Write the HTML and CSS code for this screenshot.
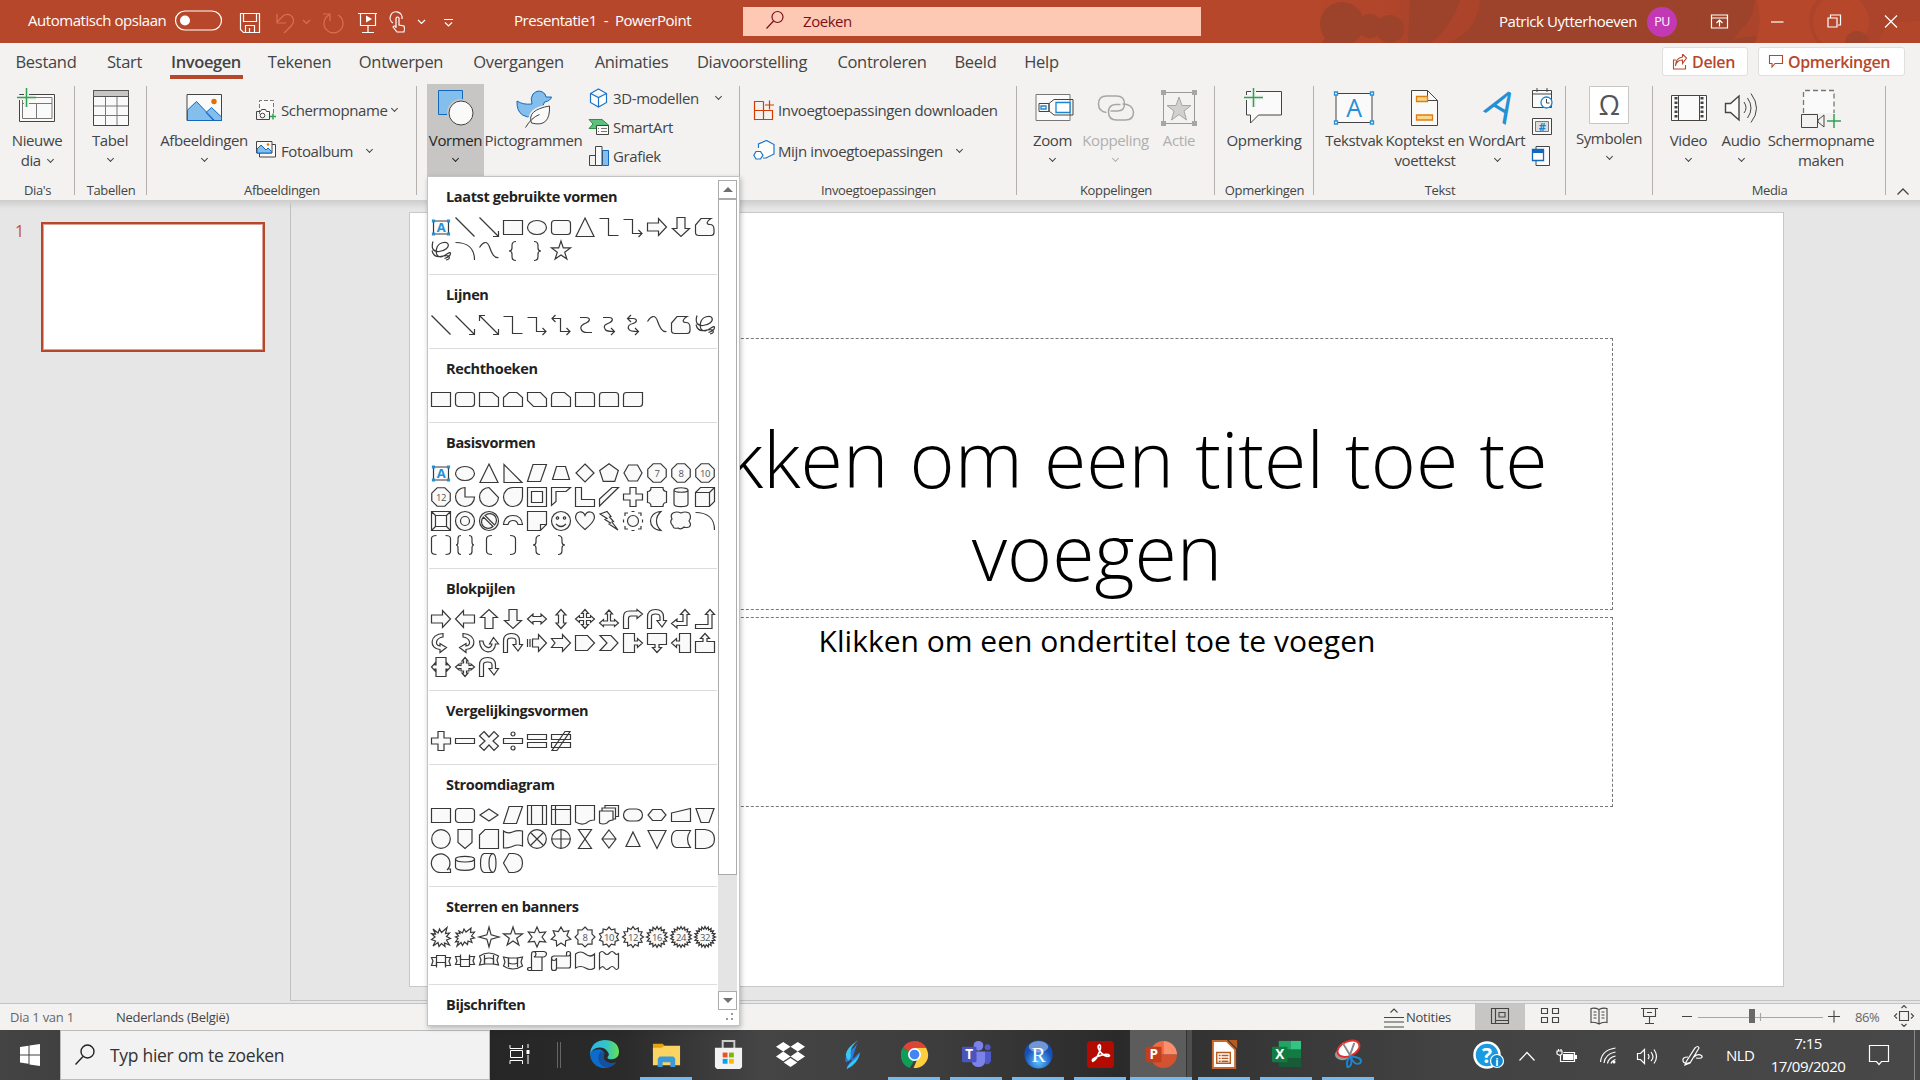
FILE: index.html
```html
<!DOCTYPE html>
<html lang="nl">
<head>
<meta charset="utf-8">
<title>Presentatie1 - PowerPoint</title>
<link rel="stylesheet" href="styles.css">
</head>
<body>
<div class="app">
  <header class="titlebar">
    <svg class="art" viewBox="1280 0 640 43"><defs><linearGradient id="fade"><stop offset="0" stop-color="#b7472a"/><stop offset="1" stop-color="#ad452a"/></linearGradient></defs><rect x="1280" width="140" height="43" fill="url(#fade)"/><rect x="1400" width="520" height="43" fill="#ab442a"/><g fill="#9d432b"><circle cx="1342" cy="24" r="22"/><circle cx="1370" cy="26" r="12"/><circle cx="1390" cy="29" r="14"/><circle cx="1335" cy="48" r="14"/><path d="M1480 0h275q-2 20-15 30-5 8-12 13h-280q30-12 32-43zM1410 0h50q-10 30-30 43h-22z"/><path d="M1715 43q20-6 50-7l-10 7z"/></g><g fill="#b7472a"><path d="M1757 0h60q-16 18 0 43h-62q8-20 2-43z"/><circle cx="1841" cy="22" r="28"/><path d="M1880 43q0-24 40-22v22z" opacity=".5"/></g><circle cx="1857" cy="43" r="12" fill="#a0432b"/></svg>
    <span class="autosave">Automatisch opslaan</span>
    <svg class="toggle" viewBox="174 9 49 22"><rect x="175.5" y="10.500" width="46" height="19" rx="9.500"/><circle cx="185" cy="20" r="5" fill="#fff" stroke="none"/></svg>
    <svg class="q-save" viewBox="239 12 22 22"><path d="M240.500 13.500h19v19h-16l-3-3zM243.500 13.500v8h13v-8M245.500 32.500v-7h9v7M249.500 28v4"/></svg>
    <svg class="q-undo dim" viewBox="275 12 22 22"><path d="M277 14v9h9M277 22l6-6c6-4 12 1 10 7-1 3-5 6-9 10"/></svg>
    <svg class="q-c1 dim" viewBox="301 16 11 11"><path d="M303 20l3.500 3.500 3.500-3.500"/></svg>
    <svg class="q-redo dim" viewBox="321 12 24 22"><path d="M323 14h7v7M329 15a9.500 9.500 0 1 0 9 0"/></svg>
    <svg class="q-show" viewBox="357 12 22 22"><path d="M358 13.500h19M360.500 13.500v12h15v-12M368 26v6M362 32.500h12"/><path d="M366 15.500v7l6-3.500z" fill="#fff" stroke="none"/></svg>
    <svg class="q-touch" viewBox="389 12 18 22"><path d="M393 23a6 6 0 1 1 9-4M396 28V18q1.500-2 3 0v7l5 1q1 2 0 6h-7l-4-5q1-2 3 0"/></svg>
    <svg class="q-c2" viewBox="415 16 13 11"><path d="M418 20l3.500 3.500 3.500-3.500"/></svg>
    <svg class="q-more" viewBox="442 14 13 13"><path d="M444 18.500h9M445 21.500l3.500 3.500 3.500-3.500"/></svg>
    <span class="docname">Presentatie1&nbsp; - &nbsp;PowerPoint</span>
    <div class="searchbox"><svg width="22" height="22" viewBox="764 11 22 22"><circle cx="777.500" cy="18" r="5.500"/><path d="M773.500 22l-7 7.500"/></svg><span>Zoeken</span></div>
    <span class="user">Patrick Uytterhoeven</span>
    <span class="avatar">PU</span>
    <svg class="w-rib" viewBox="1709 12 21 18"><path d="M1711.500 14.500h16v13h-16zM1711.500 17.500h16M1719.500 26v-6M1716.500 22.500l3-3 3 3"/></svg>
    <svg class="w-min" viewBox="1769 12 16 18"><path d="M1771 21.500h12.500"/></svg>
    <svg class="w-max" viewBox="1826 12 17 18"><path d="M1828 17.500h9v9h-9zM1830.500 17v-2.500h10v10H1838"/></svg>
    <svg class="w-close" viewBox="1883 12 16 18"><path d="M1885 15l12 12M1897 15l-12 12"/></svg>
  </header>

  <nav class="tabs">
    <span>Bestand</span><span>Start</span><span class="active">Invoegen</span><span>Tekenen</span><span>Ontwerpen</span><span>Overgangen</span><span>Animaties</span><span>Diavoorstelling</span><span>Controleren</span><span>Beeld</span><span>Help</span>
    <div class="tab-actions">
      <button class="share"><svg width="16" height="16" viewBox="1671 54 16 16"><path d="M1675 60h-2.500v9h12v-4M1674.500 66q1-6 7-6v3.500l4-5.500-4-4v3q-7 1-7 9z"/></svg>Delen</button>
      <button class="comments"><svg width="16" height="16" viewBox="1768 54 16 16"><path d="M1769.500 55.500h13v8h-7.500l-3 3.500v-3.500h-2.500z"/></svg>Opmerkingen</button>
    </div>
  </nav>

  <div class="ribbon">
    <section class="group">
      <div class="body">
        <div class="big w74"><svg viewBox="15 86 44 44"><path class="k f" d="M19.500 94.500h35v27h-35z"/><path class="k2" d="M22.500 97.500h29.500v21H22.500zM22.500 103.500H52M36.500 103.500v15"/><path stroke="#f3f2f1" stroke-width="5" d="M17 97.500h19M26.500 88v19"/><path class="gr" d="M17 97.500h19M26.500 88v19"/></svg><span>Nieuwe</span><span>dia <i class="chev"></i></span></div>
      </div><div class="label">Dia's</div>
    </section>
    <section class="group">
      <div class="body"><div class="big w70"><svg viewBox="88 86 44 44"><path class="k f" d="M93.500 90.500h35v35h-35z"/><path fill="#c8c6c4" stroke="#555" d="M93.500 90.500h35v6h-35z"/><path class="k2" d="M105.500 97v28M117 97v28M94 106h34M94 115.500h34"/></svg><span>Tabel</span><i class="chev"></i></div></div>
      <div class="label">Tabellen</div>
    </section>
    <section class="group">
      <div class="body"><div class="big w104 ml5"><svg viewBox="182 86 44 44"><path class="k f" d="M187 94.500h34.500v26H187z"/><path class="bl" d="M187.500 110l9-8.500 18 19h-27zM206 112.500l5.500-5 10 9.500v3.500h-8z"/><circle cx="214" cy="101.500" r="2.700" fill="#e07000"/></svg><span>Afbeeldingen</span><i class="chev"></i></div>
        <div class="rows two">
          <div class="row"><svg viewBox="256 99 22 22"><path class="f" stroke="#777" stroke-dasharray="4 2" d="M259.500 114v-13.500h14v13"/><path class="k" fill="#bbb" d="M256.500 111.500h4l1-2h4l1 2h3v8h-13z"/><circle class="k f" cx="262.500" cy="115.500" r="2.300"/><path class="gr" d="M270 116.500h6M273 113.500v6"/></svg>Schermopname<i class="chev"></i></div>
          <div class="row"><svg viewBox="256 140 22 22"><path class="k f" d="M259.500 144.500h16v12.500h-16z"/><path class="k f" d="M256.500 141.500h15.500v11.500h-15.500z"/><path class="bl" d="M257 149l4-4 5 5 2-2 3.500 3.500v1.500H257z"/><circle cx="268" cy="144.500" r="1.200" fill="#e07000"/></svg>Fotoalbum<i class="chev far"></i></div>
        </div></div>
      <div class="label">Afbeeldingen</div>
    </section>
    <section class="group">
      <div class="body"><div class="big w57 ml10 pressed"><svg viewBox="433 86 44 44"><path fill="#83beec" stroke="#1269bb" d="M437.500 90.500h24v24h-24z"/><circle cx="460" cy="113" r="14" fill="#c8c6c4"/><circle class="k f" cx="460" cy="113" r="12"/></svg><span>Vormen</span><i class="chev"></i></div>
        <div class="big w99"><svg viewBox="511.500 86 44 44"><path class="bl" d="M516.500 101q6 4 15 3-2-6 1-10 6-6 12 0l1 3h5.500q-1 4-7 5-1 4-4 7-8 12-18 6-6-4-5.500-14z"/><path fill="#fafafa" stroke="#f3f2f1" stroke-width="4" d="M531 123q-5-13 18-17 1 22-18 17z"/><path class="k f" d="M531 123q-5-13 18-17 1 22-18 17z"/><path class="k" fill="none" d="M525 127.500q6-10 14-13"/></svg><span>Pictogrammen</span></div>
        <div class="rows three">
          <div class="row"><svg viewBox="588 87 22 22"><path class="bs" d="M598.500 89l8 4.500v9l-8 4.500-8-4.500v-9zM590.500 93.500l8 4 8-4M598.500 97.500V107"/></svg>3D-modellen<i class="chev mid"></i></div>
          <div class="row"><svg viewBox="588 116 22 22"><path fill="#5cc07a" stroke="#279247" d="M589 119.500h13l7 6h-10l-3 3h-7l4-4.500z"/><path class="k f" d="M596.500 125.500h12v9h-12z"/><path stroke="#777" d="M598 128.500h1M598 131.500h1M601 128.500h6M601 131.500h6"/></svg>SmartArt</div>
          <div class="row"><svg viewBox="588 145 22 22"><path class="k" fill="#c8c6c4" d="M589.500 155.500h6v10h-6z"/><path fill="#83beec" stroke="#1269bb" d="M602.500 150.500h6v15h-6z"/><path class="k f" d="M595.500 146.500h6.500v19h-6.500z"/></svg>Grafiek</div>
        </div></div>
      <div class="label"></div>
    </section>
    <section class="group">
      <div class="body"><div class="rows two addins">
          <div class="row"><svg viewBox="753 99 22 22"><path fill="none" stroke="#d83b01" stroke-width="1.200" d="M763.500 101.500h-9v18h18v-9h-18M763.500 101.500v18M765 105h9M769.500 100.500v9"/></svg>Invoegtoepassingen downloaden</div>
          <div class="row"><svg viewBox="753 140 22 22"><path class="bs" d="M758.500 148v-4l8-3.500 7.500 4v9.500l-8 4h-3M756 151.500h4.500l2.500 3.700-2.500 3.800H756l-2.200-3.800z"/></svg>Mijn invoegtoepassingen<i class="chev far"></i></div>
      </div></div>
      <div class="label">Invoegtoepassingen</div>
    </section>
    <section class="group">
      <div class="body"><div class="big w57 ml7"><svg viewBox="1030.500 86 44 44"><path class="f" stroke="#777" d="M1035.500 94.500h34v26h-34z"/><path class="k f" d="M1038.500 103.500h10v8h-10z"/><path class="k" fill="#bbb" d="M1048.500 103.500l5-4h19v15.500h-19l-5-4z"/><path fill="#fff" stroke="#1a86d0" stroke-width="1.300" d="M1055.500 102.500h14v10h-14zM1040.500 106h5v3h-5z"/></svg><span>Zoom</span><i class="chev"></i></div>
        <div class="big w69 off"><svg viewBox="1093.500 86 44 44"><g fill="none" stroke="#a6a6a6" stroke-width="1.500"><path d="M1106 112.500q-8-1-8-8.500 0-8 8-8h10q8 0 8 8 0 7-7 7h-7"/><path d="M1122 104q10 0 11 8 0 8-8 8h-9q-8 0-8-8 0-7 7-7.500h5"/></g></svg><span>Koppeling</span><i class="chev"></i></div>
        <div class="big w58 off"><svg viewBox="1157 86 44 44"><path fill="none" stroke="#999" d="M1163.500 92.500h31v31h-31z"/><path fill="#a6a6a6" d="M1161 90h5v5h-5zM1192 90h5v5h-5zM1161 121h5v5h-5zM1192 121h5v5h-5z"/><path fill="#d2d0ce" stroke="#a6a6a6" d="M1179 97l3 8.500h9l-7 5.500 2.500 9-7.500-5.500-7.500 5.500 2.500-9-7-5.500h9z"/></svg><span>Actie</span></div></div>
      <div class="label">Koppelingen</div>
    </section>
    <section class="group">
      <div class="body"><div class="big w98"><svg viewBox="1242 86 44 44"><path class="k f" d="M1246.500 91.500h35v23.500h-23l-8 8v-8h-4z"/><path stroke="#f3f2f1" stroke-width="5" d="M1244 97.500h19M1253.500 88v19"/><path class="gr" d="M1244 97.500h19M1253.500 88v19"/></svg><span>Opmerking</span></div></div>
      <div class="label">Opmerkingen</div>
    </section>
    <section class="group">
      <div class="body"><div class="big w56 ml12"><svg viewBox="1332 86 44 44"><path class="k f" d="M1336 93.500h36v29h-36z"/><path fill="#fff" stroke="#2490d5" stroke-width="1.300" d="M1334.500 92h3v3h-3zM1370.500 92h3v3h-3zM1334.500 121h3v3h-3zM1370.500 121h3v3h-3z"/><text x="1354" y="117" font-size="25" text-anchor="middle" fill="#2490d5">A</text></svg><span>Tekstvak</span></div>
        <div class="big w86"><svg viewBox="1403 86 44 44"><path class="k f" d="M1411.500 90.500h16l10 10v25h-26z"/><path class="k" fill="none" d="M1427.500 90.500v10h10"/><path fill="#fbd789" stroke="#e07d10" stroke-width="1.300" d="M1416.500 96.500h11v5h-11zM1416.500 115h16v5h-16z"/></svg><span>Koptekst en</span><span>voettekst</span></div>
        <div class="big w58 wordart"><svg viewBox="1475 86 44 44"><text transform="translate(1494 118) rotate(31)" font-size="42" text-anchor="middle" fill="#2490d5">A</text></svg><span>WordArt</span><i class="chev"></i></div>
        <div class="rows three icons">
          <svg viewBox="1531 87 22 22"><path class="k f" d="M1532.500 90.500h19v17h-19zM1532.500 94h19M1537 88v4M1547 88v4"/><circle cx="1546.500" cy="102.500" r="5.500" fill="#fff" stroke="#1a86d0" stroke-width="1.300"/><path class="k" d="M1546.500 99v4h3"/></svg>
          <svg viewBox="1531 116 22 22"><path class="k f" d="M1532.500 118.500h19v16h-19z"/><path fill="#ddd" stroke="#777" d="M1535.500 121.500h13v10h-13z"/><text x="1542" y="131" font-size="11" font-weight="700" text-anchor="middle" fill="#1a86d0">#</text></svg>
          <svg viewBox="1531 145 22 22"><path class="k f" d="M1536 146.500h13.500v19H1536z"/><path fill="#fff" stroke="#1269bb" stroke-width="1.300" d="M1532.500 149.500h11v11h-11z"/><path fill="#1269bb" d="M1532.500 150h11v3h-11z"/></svg>
        </div></div>
      <div class="label">Tekst</div>
    </section>
    <section class="group">
      <div class="body"><div class="big w86 sym"><svg viewBox="1587 86 44 42"><path fill="#fff" stroke="#c8c6c4" d="M1589.500 86.500h39v37h-39z"/><text x="1609" y="114.500" font-size="27" text-anchor="middle" fill="#555">Ω</text></svg><span>Symbolen</span><i class="chev"></i></div></div>
      <div class="label"></div>
    </section>
    <section class="group">
      <div class="body"><div class="big w53 ml9"><svg viewBox="1667 86 44 44"><path class="k f" d="M1671.500 95.500h35v25h-35zM1678.500 95.500v25M1699.500 95.500v25"/><path stroke="#444" stroke-width="3" stroke-dasharray="2.500 2" d="M1676 97v22M1702 97v22"/></svg><span>Video</span><i class="chev"></i></div>
        <div class="big w52"><svg viewBox="1719 86 44 44"><path class="k f" stroke-width="1.400" d="M1725.500 103.500h5l8.500-7.500v24l-8.500-7.500h-5z"/><path class="k" fill="none" d="M1744 102q4 6 0 11M1747.500 98q7 10 0 20M1751 93.500q11 15 0 29"/></svg><span>Audio</span><i class="chev"></i></div>
        <div class="big w108"><svg viewBox="1799 86 44 44"><path class="f" stroke="#777" stroke-width="1.300" stroke-dasharray="5 3" d="M1803.500 113V90.500h30.500V113"/><path class="k" fill="#c8c6c4" d="M1801.500 114.500h16v13h-16zM1818 120l6-5v12l-6-5z"/><path class="gr" d="M1827 121h14M1834 114v14"/></svg><span>Schermopname</span><span>maken</span></div></div>
      <div class="label">Media</div>
    </section>
    <div class="collapse"><svg width="14" height="9" viewBox="0 0 14 9"><path d="M1.500 7.500l5.500-5.500 5.500 5.500"/></svg></div>
  </div>

  <main class="workspace">
    <aside class="thumbs"><span class="num">1</span><div class="thumb"></div></aside>
    <div class="canvas">
      <div class="slide">
        <div class="ph title">Klikken om een titel toe te<br>voegen</div>
        <div class="ph sub">Klikken om een ondertitel toe te voegen</div>
      </div>
    </div>
    <div class="shapes-menu">
      <div class="gallery" id="gallery"></div>
      <div class="scroll"><b class="btn up"></b><div class="grip"></div><div class="track"></div><b class="btn down"></b></div>
      <svg class="resize" width="8" height="8" viewBox="0 0 8 8"><path fill="#999" d="M5 0h2v2H5zM5 5h2v2H5zM0 5h2v2H0z"/></svg>
    </div>
  </main>

  <footer class="status">
    <span class="s1">Dia 1 van 1</span><span class="s2">Nederlands (België)</span>
    <span class="notes"><svg width="20" height="22" viewBox="1384 1007 20 22"><path d="M1384 1018.500h20M1384 1023h20M1384 1028h20M1390.500 1013.500l3.500-3.500 3.500 3.500"/></svg>Notities</span>
    <span class="view on"><svg viewBox="1490 1008 20 20"><path d="M1491.500 1009.500h17v15h-17zM1495.500 1009.500v15M1495.500 1021.500h13M1499 1013.500h6v4.500h-6z"/></svg></span>
    <span class="view"><svg viewBox="1540 1008 20 20"><path d="M1541.500 1009.500h6v5h-6zM1552.500 1009.500h6v5h-6zM1541.500 1018.500h6v5h-6zM1552.500 1018.500h6v5h-6z"/></svg></span>
    <span class="view"><svg viewBox="1589 1008 20 20"><path d="M1599 1010.500q-4-2-8-1v14q4-1 8 1.500 4-2.500 8-1.500v-14q-4-1-8 1zv14M1593.500 1013h3M1593.500 1016h3M1593.500 1019h3M1601.500 1013h3M1601.500 1016h3M1601.500 1019h3"/></svg></span>
    <span class="view"><svg viewBox="1639 1008 20 20"><path d="M1641 1009.500h17M1643.500 1009.500v8h12v-8M1649.500 1018v6M1645 1024.500h9M1647 1013.500h5"/></svg></span>
    <svg class="zoomer" viewBox="1680 1007 162 22"><path d="M1682 1017.500h10M1828 1017.500h12M1834 1011.500v12"/><path stroke="#a6a6a6" d="M1698 1018.500h125M1760.500 1014v8"/><path fill="#6b6967" stroke="none" d="M1749 1010h6v14h-6z"/></svg>
    <span class="pct">86%</span>
    <svg class="fit" viewBox="1893 1006 22 24"><path d="M1899.500 1012.500h9v9h-9zM1901.500 1009l2.500-2.500 2.500 2.500M1901.500 1025l2.500 2.500 2.500-2.500M1897 1014.500l-2.500 2.500 2.500 2.500M1911 1014.500l2.500 2.500-2.500 2.500"/></svg>
  </footer>

  <footer class="taskbar">
    <span class="start"><svg width="20" height="22" viewBox="0 0 20 22"><path fill="#fff" d="M0 3l8.500-1.300v8.800H0zM9.500 1.500L20 0v10.500H9.500zM0 11.500h8.500v8.300L0 18.500zM9.500 11.500H20V22l-10.500-1.500z"/></svg></span>
    <span class="tsearch"><svg width="22" height="24" viewBox="0 0 22 24"><circle cx="13.500" cy="8.500" r="6.500"/><path d="M9 13.500L1.500 21.500"/></svg>Typ hier om te zoeken</span>
    <span class="tview"><svg width="21" height="20" viewBox="509 1044 21 20"><path d="M510 1045v3.500h12.500V1045M510 1064v-3.500h12.500v3.500M510.500 1050.500h12v7h-12zM528 1044v4M528 1055v9"/><path d="M526.500 1050h3v4h-3z" fill="#fff" stroke="none"/></svg></span>
    <span class="tsep"></span>
    <span class="app-i"><svg viewBox="0 0 32 32"><defs><linearGradient id="e1" x1="0" x2="1"><stop offset="0" stop-color="#2bb3ec"/><stop offset=".6" stop-color="#36c6c0"/><stop offset="1" stop-color="#6ae04e"/></linearGradient></defs><path fill="#0c6ccc" d="M1 16A15 15 0 0 0 28 24q-5 2-9 0-6-3-3-9-3-6-9-4-5 1-6 5z"/><path fill="#1450a0" d="M12 13q-6 8 2 15 8 4 14-4-5 2-9 0-6-3-3-9z"/><path fill="url(#e1)" d="M1 16Q2 2 16 1q14 0 15 12 0 7-7 8-5 0-5-2 3-3 0-6-3-5-10-4-6 1-8 7z"/></svg></span>
    <span class="app-i run"><svg viewBox="0 0 32 32"><path fill="#e5a50a" d="M2 5h10l2 2v5H2z"/><path fill="#fcd462" d="M2 9h9l3-2h16v20H2z"/><path fill="#3c99dc" d="M7 29V20l2-2h14l2 2v9h-5v-5h-8v5z"/></svg></span>
    <span class="app-i"><svg viewBox="0 0 32 32"><path fill="none" stroke="#ccc" stroke-width="2" d="M10 10V2h12v8"/><path fill="#f2f2f2" d="M2 9h28v20l-2 2H4l-2-2z"/><path fill="#f25022" d="M10 14h5v5h-5z"/><path fill="#7fba00" d="M16.500 14h5v5h-5z"/><path fill="#00a4ef" d="M10 20.500h5v5h-5z"/><path fill="#ffb900" d="M16.500 20.500h5v5h-5z"/></svg></span>
    <span class="app-i"><svg viewBox="0 0 32 32"><path fill="#fff" d="M8.500 3l7.500 5-7.500 5L1 8zM23.500 3L31 8l-7.500 5L16 8zM8.500 13l7.500 5-7.500 5L1 18zM23.500 13l7.500 5-7.500 5-7.500-5zM16 19.500l7 4.700-7 4.800-7-4.800z"/></svg></span>
    <span class="app-i"><svg viewBox="0 0 32 32"><path fill="#2a7be0" d="M22 1q-1 5-6 9-9 6-7 14 7-2 13-9 3-2 0 5-4 8-12 11 0-4 5-8z"/><path fill="#38c8f0" d="M22 1q-12 8-13 15 1 5 3 6 3-2 2-8 0-6 8-13zM24 13q-2 6-8 10-5 4-6 8 12-6 14-18z"/></svg></span>
    <span class="app-i run"><svg viewBox="0 0 32 32"><path fill="#db4437" d="M16 16L4 9Q8 2 16 2t12 7z"/><path fill="#0f9d58" d="M16 16l-5 13Q2 26 2 16q0-4 2-7z"/><path fill="#ffcd40" d="M16 9h12q5 10-2 17-4 4-11 4l5-12z"/><path fill="#db4437" d="M16 2q8 0 12 7H16z"/><path fill="#0f9d58" d="M4 9l6 9 6 4-5 8Q2 27 2 16q0-4 2-7z"/><circle cx="16" cy="16" r="6.700" fill="#fff"/><circle cx="16" cy="16" r="5" fill="#4285f4"/></svg></span>
    <span class="app-i run"><svg viewBox="0 0 32 32"><circle cx="18" cy="7" r="5" fill="#7b83eb"/><circle cx="27.500" cy="8.500" r="3" fill="#5059c9"/><path fill="#5059c9" d="M25 13h6v9q-1 5-6 4z"/><path fill="#7b83eb" d="M11 13h14v10q-1 6-7 6t-7-6z"/><rect x="1" y="8" width="15" height="16" rx="1" fill="#4b53bc"/><text x="8.500" y="21" font-size="14" font-weight="700" text-anchor="middle" fill="#fff">T</text></svg></span>
    <span class="app-i run"><svg viewBox="0 0 32 32"><defs><radialGradient id="r1" cy=".75"><stop offset="0" stop-color="#5cc4ff"/><stop offset="1" stop-color="#1550b8"/></radialGradient></defs><circle cx="16" cy="16" r="14.500" fill="url(#r1)"/><ellipse cx="16" cy="8" rx="10" ry="6" fill="#fff" opacity=".4"/><text class="serif" x="16" y="23.500" font-size="22" text-anchor="middle" fill="#fff">R</text></svg></span>
    <span class="app-i run"><svg viewBox="0 0 32 32"><rect x="2" y="2" width="28" height="28" rx="4" fill="#b30b00"/><path fill="none" stroke="#fff" stroke-width="1.800" d="M8 23q-2-2 5-5t11-2q3 2-1 2-5-1-8-6t0-6q2 1 0 7-3 8-7 10z"/></svg></span>
    <span class="app-i run active"><svg viewBox="0 0 32 32"><path fill="#ed6c47" d="M18 2a14 14 0 0 0-14 14h14z"/><path fill="#ff8f6b" d="M18 2a14 14 0 0 1 14 14H18z"/><path fill="#d35230" d="M4 16a14 14 0 0 0 28 0z"/><rect x="0" y="8" width="16" height="16" rx="1" fill="#c43e1c"/><text x="8" y="21" font-size="14" font-weight="700" text-anchor="middle" fill="#fff">P</text></svg></span>
    <span class="app-i run"><svg viewBox="0 0 32 32"><path fill="#fff" stroke="#c8682c" stroke-width="2" d="M4 2h14l9 9v19H4z"/><path fill="#b85a1e" d="M20 1h9v9z"/><path fill="none" stroke="#b85a1e" stroke-width="1.500" d="M8 14h14v11H8zM10 17h2M10 20h2M10 23h2M13 17h7M13 20h7M13 23h7"/></svg></span>
    <span class="app-i run"><svg viewBox="0 0 32 32"><path fill="#21a366" d="M8 2h12v9H8z"/><path fill="#33c481" d="M20 2h11v9H20z"/><path fill="#107c41" d="M8 11h23v9H8z"/><path fill="#185c37" d="M8 20h23v9H8z"/><rect x="1" y="8" width="16" height="16" rx="1" fill="#107c41"/><text x="9" y="21" font-size="14" font-weight="700" text-anchor="middle" fill="#fff">X</text></svg></span>
    <span class="app-i run"><svg viewBox="0 0 32 32"><ellipse cx="10" cy="16" rx="8" ry="6" fill="#999"/><ellipse cx="16" cy="10" rx="12" ry="7.500" fill="#fff" stroke="#e03030" stroke-width="2" transform="rotate(-25 16 10)"/><path stroke="#888" stroke-width="2" d="M10 4l9 15M22 4l-5 14"/><path fill="none" stroke="#1a86d0" stroke-width="2" d="M18 18q-5 4-3 11 6-1 3-11 4 10 10 7 4-6-10-7z"/></svg></span>
    <span class="tray">
      <svg class="t-help" viewBox="1472 1042 34 30"><circle cx="1487" cy="1056" r="12.500" fill="#1a9be0" stroke="#fff" stroke-width="2.500"/><text x="1487" y="1064" font-size="21" font-weight="700" text-anchor="middle" fill="#fff">?</text><circle cx="1497" cy="1062" r="6.500" fill="#0e88d0"/><text x="1497" y="1066.500" font-size="11" font-weight="700" text-anchor="middle" fill="#fff">i</text></svg>
      <svg class="t-up" viewBox="1517 1046 20 18"><path d="M1519.500 1059.500l7.500-8 7.500 8"/></svg>
      <svg class="t-bat" viewBox="1555 1046 24 18"><path d="M1563.500 1051.500h11v9h-14v-6M1557 1050h5v3l-2 1.500-3-1.500zM1558.500 1050v-2M1561 1050v-2"/><path fill="#fff" stroke="none" d="M1563 1053h10.500v6H1563zM1575 1054h2v4h-2z"/></svg>
      <svg class="t-wifi" viewBox="1598 1046 20 20"><path d="M1600.500 1062q1-12 15-14M1604 1063q1-9 11.500-11M1607.500 1063.500q1-6 8-7.500M1611 1063.500q1-3 4.500-4"/><circle cx="1614" cy="1062" r="1.500" fill="#fff" stroke="none"/></svg>
      <svg class="t-vol" viewBox="1635 1045 24 20"><path d="M1637.500 1052.500h3l4-4v14l-4-4h-3zM1648 1053q2 3 0 5M1651 1051q4 5 0 9M1654 1048.500q5 7 0 14"/></svg>
      <svg class="t-pen" viewBox="1680 1044 24 22"><path d="M1686 1061l9-14q3-3 4 0l-9 15-5 2zM1688 1056q-6 0-5 4 1 4 8 1M1694 1056q4-4 8-1 1 3-6 2"/></svg>
      <span class="lang">NLD</span>
      <span class="clock"><span>7:15</span><span>17/09/2020</span></span>
      <svg class="t-note" viewBox="1867 1043 24 24"><path d="M1869.500 1045.500h19v16h-7l-2.500 3-2.500-3h-7z"/></svg>
      <span class="edge"></span>
    </span>
  </footer>
</div>
<script src="shapes.js"></script>
</body>
</html>
```
FILE: styles.css
```css
* { box-sizing: border-box; }
body { margin: 0; overflow: hidden; font-family: "Open Sans", "Noto Sans", sans-serif; color: #444; }
svg { display: block; flex: none; }
.app { width: 1920px; height: 1080px; display: grid; grid-template-rows: 43px 41px 116px 804px 26px 50px; background: #e6e6e6; }

.titlebar { position: relative; background: #b7472a; color: #fff; font-size: 15px; letter-spacing: -.45px; white-space: nowrap; display: grid; align-items: center;
  grid-template-columns: 28px 146px 65px 36px 26px 20px 36px 32px 26px 27px 72px 229px 756px 148px 62px 60px 57px 57px 37px; }
.titlebar > * { grid-row: 1; }
.titlebar > svg:not(.art) { height: 43px; position: relative; fill: none; stroke: #fff; stroke-width: 1.2; }
.titlebar > svg.dim { stroke: #dd6e53; }
.art { position: absolute; right: 0; top: 0; width: 640px; height: 43px; }
.autosave { grid-column: 2; padding-bottom: 3px; }
.toggle { grid-column: 3; width: 49px; margin-top: -3px; }
.q-save { grid-column: 4; width: 22px; }
.q-undo { grid-column: 5; width: 22px; }
.q-c1 { grid-column: 6; width: 11px; }
.q-redo { grid-column: 7; width: 24px; }
.q-show { grid-column: 8; width: 22px; }
.q-touch { grid-column: 9; width: 18px; }
.q-c2 { grid-column: 10; width: 13px; }
.q-more { grid-column: 11; width: 13px; }
.titlebar > .q-save, .titlebar > .q-undo, .titlebar > .q-redo, .titlebar > .q-show, .titlebar > .q-touch { padding-top: 3px; }
.docname { grid-column: 12; padding-bottom: 3px; }
.searchbox { grid-column: 13; width: 458px; height: 29px; background: #fdc9b5; color: #7a0f1a; display: flex; align-items: center; gap: 17px; padding: 0 0 1px 21px; }
.searchbox svg { fill: none; stroke: #7a0f1a; stroke-width: 1.2; }
.user { grid-column: 14; position: relative; padding-bottom: 1px; }
.avatar { grid-column: 15; position: relative; width: 30px; height: 30px; border-radius: 50%; background: #c239b3; font-size: 12.5px; line-height: 30px; text-align: center; }
.w-rib { grid-column: 16; width: 21px; }
.w-min { grid-column: 17; width: 16px; }
.w-max { grid-column: 18; width: 17px; }
.w-close { grid-column: 19; width: 16px; }

.tabs { background: #f3f2f1; display: grid; grid-template-columns: 92px 65px 98px 89px 114px 121px 105px 136px 124px 63px 69px 1fr; font-size: 16.5px; letter-spacing: -.3px; text-align: center; white-space: nowrap; }
.tabs > span { display: flex; flex-direction: column; align-items: center; justify-content: flex-start; line-height: 24px; padding-top: 7px; }
.tabs > .active { font-weight: 600; letter-spacing: -.4px; }
.tabs > .active::after { content: ""; width: 73px; height: 4px; margin-top: 1px; background: #b7472a; }
.tab-actions { display: flex; justify-content: flex-end; gap: 10px; padding: 4px 15px 8px 0; }
.tab-actions button { border: 1px solid #e1dfdd; border-radius: 3px; background: #fff; color: #b7472a; font: 600 16px "Open Sans", sans-serif; letter-spacing: -.35px; display: flex; align-items: center; gap: 4px; padding: 0 0 0 9px; white-space: nowrap; }
.tab-actions svg { fill: none; stroke: #b7472a; stroke-width: 1.1; }
.share { width: 86px; }
.comments { width: 147px; }

.ribbon { background: #f3f2f1; display: grid; grid-template-columns: 75px 72px 270px 323px 277px 198px 99px 252px 87px 233px 1fr; font-size: 15px; letter-spacing: -.38px; white-space: nowrap; }
.group { display: grid; grid-template-rows: 92px 24px; background: linear-gradient(#b3b0ad, #b3b0ad) right 2px / 1px 109px no-repeat; }
.body { display: flex; }
.label { font-size: 13px; letter-spacing: -.35px; text-align: center; line-height: 28px; }
.big { display: flex; flex-direction: column; align-items: center; padding-top: 2px; line-height: 20px; flex: none; }
.big svg { width: 44px; height: 44px; }
.big > .chev { margin-top: 6px; }
.wordart svg { overflow: visible; }
.sym svg { height: 42px; }
.pressed { background: #c8c6c4; color: #262626; }
.off { color: #b1afad; }
.w52 { width: 52px; } .w53 { width: 53px; } .w56 { width: 56px; } .w57 { width: 57px; } .w58 { width: 58px; } .w69 { width: 69px; } .w70 { width: 70px; } .w74 { width: 74px; } .w86 { width: 86px; } .w98 { width: 98px; } .w99 { width: 99px; } .w104 { width: 104px; } .w108 { width: 108px; }
.ml5 { margin-left: 5px; } .ml7 { margin-left: 7px; } .ml9 { margin-left: 9px; } .ml10 { margin-left: 10px; } .ml12 { margin-left: 12px; }
.chev { display: inline-block; width: 5px; height: 5px; border: solid currentColor; border-width: 0 1.4px 1.4px 0; transform: rotate(45deg); flex: none; }
.big span .chev { margin: 0 0 4px 4px; }
.row { display: flex; align-items: center; }
.row svg, .icons svg { width: 22px; height: 22px; }
.row svg { margin-right: 3px; }
.row .chev { margin: -2px 0 0 4px; }
.row .chev.far { margin-left: 14px; }
.row .chev.mid { margin-left: 17px; }
.two .row { height: 41px; }
.two { padding-top: 5px; }
.three .row { height: 29px; }
.three.rows { padding: 0 0 0 5px; margin-top: -1px; }
.icons { display: flex; flex-direction: column; gap: 7px; }
.three.icons { padding-top: 4px; }
.addins { padding-left: 13px; }
.k { stroke: #444; fill: none; } .f { fill: #fafafa; } .k2 { stroke: #777; fill: none; } .gr { stroke: #2fa351; stroke-width: 1.5; }
.bl { fill: #83beec; stroke: #1269bb; } .bs { fill: #fff; stroke: #1a73c8; stroke-width: 1.2; }
.collapse { padding: 103px 0 0 10px; }
.collapse svg { fill: none; stroke: #444; stroke-width: 1.3; }

.workspace { position: relative; display: grid; grid-template-columns: 291px 1fr; background: linear-gradient(#cdcdcd, #e6e6e6) top / 100% 9px no-repeat #e6e6e6; border-bottom: 1px solid #c3c3c3; }
.thumbs { display: flex; border-right: 1px solid #c0c0c0; margin: 3px 0 2px; padding: 19px 0 0 15px; color: #c8502f; font-size: 16px; }
.num { width: 26px; line-height: 18px; }
.thumb { width: 224px; height: 130px; background: #fff; border: 2px solid #b7472a; outline: 1px solid rgba(183, 71, 42, .5); outline-offset: -3px; }
.canvas { border-bottom: 1px solid #c3c3c3; margin-bottom: 2px; padding: 12px 0 0 118px; }
.slide { width: 1375px; height: 775px; background: #fff; border: 1px solid #c8c8c8; padding: 125px 0 0 171px; color: #000; text-align: center; white-space: nowrap; }
.ph { width: 1032px; border: 1px dashed #777; }
.title { height: 272px; font-size: 77px; font-weight: 300; line-height: 93px; padding-top: 73px; letter-spacing: 0; word-spacing: 1.2px; }
.sub { height: 190px; margin-top: 7px; font-size: 30px; line-height: 40px; padding-top: 3px; }

.shapes-menu { position: absolute; left: 427px; top: -24px; width: 313px; height: 850px; background: #fff; border: 1px solid #c3c3c3; box-shadow: 1px 2px 5px rgba(0,0,0,.25); display: grid; grid-template-columns: 290px 19px; overflow: hidden; }
.gallery section { margin: 0 1px; border-bottom: 1px solid #dcdcdc; padding-bottom: 11px; }
.gallery section:last-child { border: 0; }
.gallery h3 { margin: 0; height: 38px; padding: 1px 0 0 17px; line-height: 37px; font-size: 14.5px; font-weight: 700; letter-spacing: -.36px; color: #222; }
.cells { display: grid; grid-template-columns: repeat(12, 24px); grid-auto-rows: 24px; }
.cells svg { width: 20px; height: 20px; margin: 2px; fill: #fafafa; stroke: #383838; stroke-width: 1.2; overflow: visible; }
.cells text { stroke: none; fill: #555; font-size: 9.5px; text-anchor: middle; letter-spacing: -.4px; }
.cells .open { fill: none; }
.scroll { margin-top: 3px; height: 830px; display: grid; grid-template-rows: 19px 676px 1fr 19px; background: #e4e4e4; }
.btn, .grip { background: #fff; border: 1px solid #ababab; display: grid; place-items: center; }
.btn::after { content: ""; border: 5px solid transparent; border-bottom-color: #707070; margin-top: -5px; }
.btn.down::after { border-bottom-color: transparent; border-top-color: #707070; margin-top: 5px; }
.resize { position: absolute; right: 5px; bottom: 4px; }

.status { background: #f3f2f1; font-size: 13px; letter-spacing: -.25px; white-space: nowrap; display: grid; align-items: center;
  grid-template-columns: 116px 1268px 91px 50px 50px 48px 52px 5px 175px 38px 1fr; }
.status svg { fill: none; stroke: #444; stroke-width: 1.1; }
.s1 { padding-left: 10px; color: #666; }
.notes { display: flex; align-items: center; gap: 2px; }
.view { height: 26px; display: grid; place-items: center; }
.view svg { width: 20px; height: 20px; }
.view.on { background: #c8c6c4; }
.zoomer { grid-column: 9; width: 162px; height: 22px; }
.pct { color: #666; letter-spacing: -.4px; }
.fit { width: 22px; height: 24px; }

.taskbar { background: linear-gradient(90deg, #444 0, #262626 490px, #2a2a2a 620px, #454545 760px, #3c3c3c 950px, #2a2a2a 1120px, #333 1200px, #434343 1450px, #484848 1920px); display: flex; align-items: stretch; color: #fff; }
.start { width: 60px; display: grid; place-items: center; }
.tsearch { width: 430px; background: #f2f2f2; border: 1px solid #bbb; color: #333; font-size: 17.5px; letter-spacing: -.3px; display: flex; align-items: center; gap: 14px; padding-left: 13px; white-space: nowrap; }
.tsearch svg { fill: none; stroke: #222; stroke-width: 1.4; }
.tview { width: 67px; padding: 14px 0 0 19px; }
.tview svg { fill: none; stroke: #fff; }
.tsep { width: 4px; height: 26px; margin: 12px 17px 0 0; border: solid #666; border-width: 0 1px; }
.app-i { width: 52px; margin-right: 10px; display: grid; place-items: center; border-bottom: 3px solid transparent; }
.app-i svg { width: 31px; height: 31px; margin-top: 1px; }
.app-i.run { border-color: #76b9ed; }
.app-i.active { width: 62px; margin: 0 6px 0 -6px; background: linear-gradient(90deg, #5c5c5c 56px, #333 56px, #333 57px, #4e4e4e 57px); }
.serif { font-family: "Liberation Serif", serif; }
.tray { display: grid; align-items: center; margin-left: auto; grid-template-columns: 45px 38px 43px 37px 45px 46px 41px 82px 18px 47px 6px; font-size: 15px; letter-spacing: -.5px; }
.tray svg { fill: none; stroke: #fff; stroke-width: 1.2; }
.tray text { stroke: none; letter-spacing: 0; }
.t-help { width: 34px; } .t-up { width: 20px; } .t-bat { width: 24px; } .t-wifi { width: 20px; } .t-vol { width: 24px; } .t-pen { width: 24px; }
.t-help, .t-up, .t-bat, .t-wifi, .t-vol, .t-pen { margin-top: 2px; }
.clock { display: flex; flex-direction: column; align-items: center; line-height: 23px; }
.t-note { grid-column: 10; width: 24px; }
.edge { border-left: 1px solid #888; height: 50px; }
```
FILE: shapes.js
```js
const P = (n, R, rot = -90, cy = 10) => Array.from({ length: n }, (_, i) => {
  const a = (rot + i * 360 / n) * Math.PI / 180;
  return (10 + R * Math.cos(a)).toFixed(2) + ' ' + (cy + R * Math.sin(a)).toFixed(2);
});
const poly = (...a) => 'M' + P(...a).join('L') + 'z';
const star = (n, R, r) => {
  const o = P(n, R), i = P(n, r, -90 + 180 / n);
  return 'M' + o.map((p, k) => p + 'L' + i[k]).join('L') + 'z';
};
const path = d => `<path d="${d}"/>`;
const open = d => `<path class="open" d="${d}"/>`;
const lab = (d, t) => path(d) + `<text x="10" y="13.500">${t}</text>`;
const circ = (r, x = 10, y = 10) => `<circle cx="${x}" cy="${y}" r="${r}"/>`;

const LB = 'M13 .5q-4 0-4 4v2.500q0 3-3 3 3 0 3 3v2.500q0 4 4 4';
const SCR = 'M2 .5C0 7 2 11 8 10.500S18.500 6 17 3 7 1 5.500 8s3 9 7 7 7-5 7-2.500-3 4-6 5M1 9.500C2 14 5 16 9 15.500s8-2 9 0-.5 3-3 3.500';
const shapes = {
  tbx: '<path d="M2.500 4h15v13h-15z"/><path d="M1.500 3h2v2h-2zM16.500 3h2v2h-2zM1.500 16h2v2h-2zM16.500 16h2v2h-2z" stroke="#2490d5" fill="#2490d5"/><text x="10" y="15" style="font-size:13px;font-weight:700;fill:#2490d5">A</text>',
  line: open('M.5.5l19 19'), arrow: open('M.5.5l19 19M19.500 14v5.500H14'), darrow: open('M.5.5l19 19M19.500 14v5.500H14M.5 6V.5H6'),
  rect: path('M.5 3.500h19v14H.5z'), ell: '<ellipse cx="10" cy="10.500" rx="9.500" ry="7"/>',
  rrect: '<rect x=".5" y="3.500" width="19" height="14" rx="3"/>',
  tri: path('M10 1l9 18.500H1z'), elbow: open('M.5 1.500h9v17h10'),
  elbowa: open('M.5 2.500h9v14h9M15.500 13l3.500 3.500-3.500 3.500'), elbowd: open('M1 3.500h8.500v13h9M15.500 13l3.500 3.500-3.500 3.500M4.500 0L1 3.500 4.500 7'),
  cur: open('M5 2.500h6c5 0 4 4 0 5.500s-6 3-5 6 3 3.500 6 3.500h5'),
  cura: open('M4 2.500h6c5 0 4 4 0 5.500s-6 3-4 6c1 2.500 4 2.500 9 2.500M12 13l3.500 3.500L12 20'),
  curd: open('M5 3.500h5c5 0 4 4 0 5s-6 3-4 6c1 2 4 2 9 2M12 13l3.500 3.500L12 20M8 0L4.500 3.500 8 7'),
  rarr: path('M.5 6h11V1.500l8 8.500-8 8.500V14H.5z'), free: path('M6 1.500h10c-5 3-5 6-1 6 3 0 4 2 4 5v3q0 3-3 3H4q-3.500 0-3.500-3V8z'),
  scrib: open(SCR), arc: open('M.5 1.500c12 0 19 6 19 17.500'), curve: open('M.5 6.500C4 1 8-1 10.500 6S15 17 19.500 16.500'),
  lb: open(LB), star5: path(star(5, 10, 3.900)),
  s1: path('M.5 3.500h13l6 5v9H.5z'), s2: path('M6 3.500h8l5.500 5v9H.5v-9z'), sd: path('M.5 3.500h13l6 6v8h-13l-6-6z'),
  sr: path('M4 3.500h9.500l6 5v9H.5v-10q0-4 3.500-4z'), r1: path('M.5 3.500h16q3 0 3 3v11H.5z'),
  r2: path('M3.500 3.500h13q3 0 3 3v11H.5v-11q0-3 3-3z'), rd: path('M3.500 3.500h16v11q0 3-3 3H.5v-11q0-3 3-3z'),
  rtri: path('M1 1.500v18h18z'), para: path('M6 1.500h13.500l-6 17H.5z'), trap: path('M5.500 3.500h9l4 13h-17z'), dia: path('M10 1l9 9-9 9-9-9z'),
  pent: path(poly(5, 9.800, -90, 10.500)), hex: path('M5.500 2h9l4.500 8-4.500 8h-9L1 10z'),
  o7: lab(poly(8, 10, 22.500), 7), o8: lab(poly(8, 10, 22.500), 8), o10: lab(poly(8, 10, 22.500), 10), o12: lab(poly(8, 10, 22.500), 12),
  pie: path('M10 .5A9.500 9.500 0 1 0 19.500 10H10z'), chord: path('M10 .5A9.500 9.500 0 1 0 19.500 10.500z'), tear: path('M10 .5h9.500V10A9.500 9.500 0 1 1 10 .5z'),
  frame: path('M.5.5h19v19H.5zM4.500 4.500v11h11v-11z'), half: path('M.5.5h19l-4.500 4H5v10l-4.500 4z'), ell2: path('M.5.5h6v12h13v7H.5z'),
  stripe: path('M.5 12L13 .5h6.500L.5 19z'), plus: path('M7 .5h6V7h6.500v6H13v6.500H7V13H.5V7H7z'),
  plaque: path('M4 .5h12q0 4 3.500 4v11q-3.500 0-3.500 4H4q0-4-3.500-4v-11Q4 4.500 4 .5z'),
  can: path('M3 3v14c0 3.500 14 3.500 14 0V3c0-3-14-3-14 0zc0 3 14 3 14 0'), cube: path('M.5 5.500l5-5h14v14l-5 5H.5zM.5 5.500h14v14M14.500 5.500l5-5'),
  bevel: path('M.5.5h19v19H.5zM4.500 4.500v11h11v-11zM.5.5l4 4M19.500.5l-4 4M.5 19.500l4-4M19.500 19.500l-4-4'),
  donut: circ(9.500) + circ(4.500), no: circ(9.500) + path('M6 4.500a6.500 6.500 0 0 1 9.500 9.500zM4.500 6a6.500 6.500 0 0 0 9.500 9.500z'),
  barc: path('M.5 13.500q1-9 9.500-9t9.500 9H15q-1-4-5-4t-5 4z'), fold: path('M.5.5h19v13l-6 6H.5zM13.500 19.500v-6h6'),
  smile: circ(9.500) + circ(1.200, 6.500, 7) + circ(1.200, 13.500, 7) + open('M5 13q5 5 10 0'),
  heart: path('M10 18.500Q1 11 .5 6.500C1-.5 8-.5 10 4.500c2-5 9-5 9.500 2Q19 11 10 18.500z'),
  bolt: path('M1 3l7-2.500 4 5-1.500.5 4 4.500-1.500.5 6 8-9-6 1.500-1L6 8.500l2-1z'),
  sun: circ(5.500) + open('M8.500.5h3M8.500 19.500h3M.5 8.500v3M19.500 8.500v3M2 5V2h3M18 5V2h-3M2 15v3h3M18 15v3h-3'),
  moon: path('M14 .5C0 1 0 19 14 19.500 8 14 8 6 14 .5z'), cloud: path('M2 2q4-2 8 0 4-2 8 0 3 4 0 8 3 4 0 6-4 1-5 0-3 3-6 1-5 1-5-2-4-4-1-7-2-4 1-6z'),
  dbr: open('M5.500.5q-5 0-5 3v13q0 3 5 3M14.500.5q5 0 5 3v13q0 3-5 3'),
  dbc: open('M6 .5q-3 0-3 3V7q0 3-2 3 2 0 2 3v3.500q0 3 3 3M14 .5q3 0 3 3V7q0 3 2 3-2 0-2 3v3.500q0 3-3 3'),
  lbk: open('M13 .5Q7.500.5 7.500 4v12q0 3.500 5.500 3.500'),
  lr: path('M.5 10L6 5v2.500h8V5l5.500 5-5.500 5v-2.500H6V15z'),
  quad: path('M10 .5l3.500 4h-2v4h4v-2l4 3.500-4 3.500v-2h-4v4h2l-3.500 4-3.500-4h2v-4h-4v2L.5 10l4-3.500v2h4v-4h-2z'),
  tarr: path('M10 1l3.500 4h-2v7h4v-1.500l4 3.500-4 3.500V16h-11v1.500L.5 14l4-3.500V12h4V5h-2z'),
  bent: path('M.5 19.500V8q0-6 6-6H14V.5l5.500 4.500L14 9.500V7H8Q5.500 7 5.500 9.500v10z'),
  uturn: path('M.5 19.500V8Q.5.500 8.500.500t8 7.500v3.500h3L15 18l-5-6.500h3V8q0-3-4.500-3t-4 3v11.500z'),
  lup: path('M14 .5l4.500 5H16v11H6v2.500L.5 14.500 6 10v2.500h6v-7H9.500z'), bup: path('M15 .5l4.500 5H17v14H.5v-4H13v-10h-2.500z'),
  cr: path('M12 .5C-2 1-2 16 9 16.500v3l6.500-5-6.500-4v2.500C3 12 5 5 12 4z'),
  striped: path('M5.500 6h6V1.500l8 8.500-8 8.500V14h-6z') + open('M.5 6v8M3 6v8'), notch: path('M.5 5.500h11v-4l8 8.500-8 8.500v-4H.5L4 10z'),
  pentag: path('M.5 2.500h12L19.500 10l-7 7.500H.5z'), chev: path('M1 2.500h11l7 7.500-7 7.500H1l7-7.500z'),
  callr: path('M.5.5h11v7.500h3V5.500L19.500 10l-5 4.500V12h-3v7.500H.5z'),
  calllr: path('M5 .5h10v7.500h1V6l3.500 4-3.500 4v-2h-1v7.500H5V12H4v2L.5 10 4 6v2h1z'),
  quadc: path('M10 .5l3 3.500h-1.500v2H14v2.500h2V7l3.500 3-3.500 3v-1.500h-2V14h-2.500v2H13l-3 3.500L7 16h1.500v-2H6v-2.500H4V13L.5 10 4 7v1.500h2V6h2.500V4H7z'),
  minus: path('M.5 7.500h19v5H.5z'), mul: path('M5 .5l5 5.500 5-5.500L19.500 5 14 10l5.500 5-4.500 4.500-5-5.500-5 5.500L.5 15 6 10 .5 5z'),
  div: path('M.5 7.500h19v5H.5z') + circ(2, 10, 3) + circ(2, 10, 17), eq: path('M.5 3.500h19v5H.5zM.5 11.500h19v5H.5z'),
  neq: path('M.5 3.500h19v5H.5zM.5 11.500h19v5H.5zM14 .5h5L6 19.500H1z'),
  fdia: path('M10 4l9 6-9 6-9-6z'), pre: path('M.5.5h19v19H.5zM4.500.5v19M15.500.5v19'), int: path('M.5.5h19v19H.5zM4.500.5v19M.5 4.500h19'),
  doc: path('M.5.5h19V15q-5 0-8 3-5 2.500-11-1z'), mdoc: path('M6 .5h13.500v11H6z') + path('M3 3h13.500v11H3z') + path('M.5 6h13.500v9q-4 0-6 3-4 2-7.500 0z'),
  term: '<rect x=".5" y="4" width="19" height="12" rx="6"/>', prep: path('M5.500 4.500h9L19 10l-4.500 5.500h-9L1 10z'), man: path('M.5 8l19-4.500v13H.5z'),
  mop: path('M1 3.500h18l-5 14H6z'), c: circ(9.300), off: path('M3 .5h14v13l-7 6-7-6z'), card: path('M6 .5h13.500v19H.5V6z'),
  tape: path('M.5 2q4 3 9 1t10-1v15q-5-2-9 0t-10 2z'), sumj: circ(9.300) + open('M3.500 3.500l13 13M16.500 3.500l-13 13'), or: circ(9.300) + open('M10 .5v19M.5 10h19'),
  coll: path('M3.500.5h13l-13 19h13z'), sort: path('M10 1l7 9-7 9-7-9zM3 10h14'), ext: path('M10 3l7 14.500H3z'), mer: path('M1 1.500h18l-9 18z'),
  store: path('M5 1.500h14.500q-6 9 0 17H5Q.5 17 .5 10T5 1.500z'), delay: path('M.5.5H10q9.500 1 9.500 9.500T10 19.500H.5z'),
  seq: path('M16 17A9.300 9.300 0 1 0 10 19.500h9.500V16h-3'), disk: path('M.5 6v8c0 4.500 19 4.500 19 0V6C19.500 2.500.5 2.500.5 6zc0 4 19 4 19 0'),
  das: path('M5 .5q-3.500 1-3.500 9.500T5 19.500h9q3-1 3-9.500T14 .5zM14 .5q-4 1-4 9.500t4 9.500'), disp: path('M6 .5h5q8.500 1 8.500 9.500T11 19.500H6L.5 10z'),
  ex1: path('M2 2l5 4 1.500-4 2 3.500L16 .5l-1.500 6 4-.5-3 3.500 4 2-4 1.500 3 5-5-2 .5 3.500-3.500-3-2.500 3-1-4L2 19l2.500-5-4-1.500L4 10 .5 6.500l4 .5z'), ex2: path('M4 4l3.500 2L9 2l2 3 5-4-.5 4.500 4-.5-3 4 3 2-4 1 1.500 3.500-4-1.500-.5 3.500-3-2.500-2 3.500-1.500-3L2 19l1.500-4.500-3 .5L3 11.500.5 10l3-1L1 6l4 .5z'),
  st4: path(star(4, 10, 3)), st6: path(star(6, 10, 5)), st7: path(star(7, 10, 6)),
  n8: lab(star(8, 10, 7.600), 8), n10: lab(star(10, 10, 7.600), 10), n12: lab(star(12, 10.500, 7.700), 12), n16: lab(star(16, 10.500, 7.700), 16), n24: lab(star(18, 10.500, 7.900), 24), n32: lab(star(20, 10.500, 7.900), 32),
  rib: path('M.5 6.500h5v-2h9v2h5L18 10l1.500 4.500h-5v-3h-9v3h-5L2 10z') + open('M5.500 6v8M14.500 6v8M5.500 11.500v5M14.500 11.500v5'),
  rib2: path('M.5 5q9-6 19 0L18 9l1.500 5-5-1V8q-4-2-9 0v5l-5 1L2 9z') + open('M5.500 4v9M14.500 4v9M5.500 13h9'),
  vscr: path('M4.500 3v13.500H3q-2.500 0-2.500 1.500T3 19.500h12V6h2q2.500-1 2.500-3T17 .5H7Q4.500.5 4.500 3zM7 .5Q9 1 9 3T7 6h8M4.500 16.500v3'),
  hscr: path('M3 5h12.500V2.500q0-2 2-2t2 2V15q0 2-2 2H5.500v.5q0 2-2.500 2t-2.500-2V7.500Q.5 5 3 5zM.5 7.500Q1 9.500 3 9.500t2.500-2.500V17M15.500 5h2q2-.5 2-2.500'),
  wave: path('M.5 3q5-4 10 0t9 0v14q-4 3-9 0t-10 0z'), dwave: path('M.5 2q2.500-3 5 0t5 0 5 0 4 0v15q-2 3-4 0t-5 0-5 0-5 1z'),
};
const T = { 90: 'rotate(90 10 10)', 180: 'rotate(180 10 10)', 270: 'rotate(-90 10 10)', x: 'translate(20) scale(-1 1)', y: 'translate(0 20) scale(1 -1)' };
const sections = [
  ['Laatst gebruikte vormen', 'tbx line arrow rect ell rrect tri elbow elbowa rarr rarr@90 free scrib arc curve lb lb@x star5'],
  ['Lijnen', 'line arrow darrow elbow elbowa elbowd cur cura curd curve free scrib'],
  ['Rechthoeken', 'rect rrect s1 s2 sd sr r1 r2 rd'],
  ['Basisvormen', 'tbx ell tri rtri para trap dia pent hex o7 o8 o10 o12 pie chord tear frame half ell2 stripe plus plaque can cube bevel donut no barc fold smile heart bolt sun moon cloud arc dbr dbc lbk lbk@x lb lb@x'],
  ['Blokpijlen', 'rarr rarr@180 rarr@270 rarr@90 lr lr@90 quad tarr bent uturn lup bup cr cr@x cr@270 uturn striped notch pentag chev callr callr@90 callr@180 callr@270 calllr quadc uturn'],
  ['Vergelijkingsvormen', 'plus minus mul div eq neq'],
  ['Stroomdiagram', 'rect rrect fdia para pre int doc mdoc term prep man mop c off card tape sumj or coll sort ext mer store delay seq disk das disp'],
  ['Sterren en banners', 'ex1 ex2 st4 star5 st6 st7 n8 n10 n12 n16 n24 n32 rib rib@y rib2 rib2@y vscr hscr wave dwave'],
  ['Bijschriften', ''],
];
document.getElementById('gallery').innerHTML = sections.map(([name, list]) =>
  `<section><h3>${name}</h3><div class="cells">` + list.split(' ').filter(Boolean).map(s => {
    const [id, t] = s.split('@');
    return `<svg viewBox="0 0 20 20"><g${t ? ` transform="${T[t]}"` : ''}>${shapes[id]}</g></svg>`;
  }).join('') + '</div></section>').join('');
```
